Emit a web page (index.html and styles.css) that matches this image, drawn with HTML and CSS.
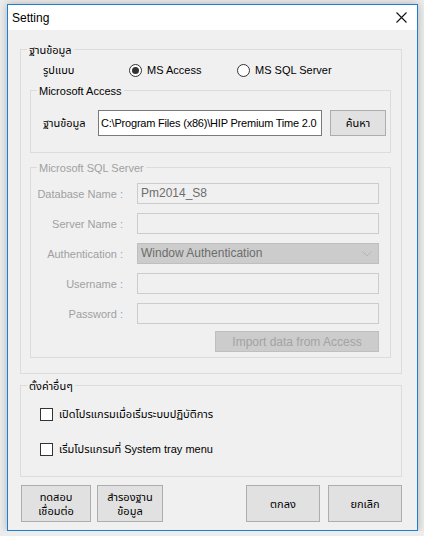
FILE: index.html
```html
<!DOCTYPE html>
<html lang="th">
  <head>
    <meta charset="UTF-8" />
    <title>Setting</title>
    <link rel="stylesheet" href="styles.css">
  </head>
  <body>
    <div class="window">
      <div class="titlebar">
        <span class="title">Setting</span>
        <svg class="close" width="11" height="11" viewBox="0 0 11 11">
          <path d="M0.5 0.5 L10.5 10.5 M10.5 0.5 L0.5 10.5" stroke="#111" stroke-width="1.1" fill="none" />
        </svg>
      </div>
      <div class="content">
        <div class="group main-group">
          <span class="legend">ฐานข้อมูล</span>
          <div class="type-row">
            <span class="type-label">รูปแบบ</span>
            <span class="option first"><span class="radio on"></span>MS Access</span>
            <span class="option"><span class="radio"></span>MS SQL Server</span>
          </div>
          <div class="group access-group">
            <span class="legend">Microsoft Access</span>
            <div class="path-row">
              <span class="path-label">ฐานข้อมูล</span>
              <div class="textbox">C:\Program Files (x86)\HIP Premium Time 2.0</div>
              <div class="btn browse">ค้นหา</div>
            </div>
          </div>
          <div class="group sql-group">
            <span class="legend muted">Microsoft SQL Server</span>
            <div class="sql-rows">
              <div class="field">
                <span class="field-label">Database Name :</span>
                <div class="box">Pm2014_S8</div>
              </div>
              <div class="field">
                <span class="field-label">Server Name :</span>
                <div class="box"></div>
              </div>
              <div class="field">
                <span class="field-label">Authentication :</span>
                <div class="box combo">
                  <span>Window Authentication</span>
                  <svg width="10" height="6" viewBox="0 0 10 6">
                    <path d="M0.5 0.5 L5 5 L9.5 0.5" stroke="#b5b5b5" fill="none" />
                  </svg>
                </div>
              </div>
              <div class="field">
                <span class="field-label">Username :</span>
                <div class="box"></div>
              </div>
              <div class="field">
                <span class="field-label">Password :</span>
                <div class="box"></div>
              </div>
              <div class="import-row">
                <div class="btn disabled">Import data from Access</div>
              </div>
            </div>
          </div>
        </div>
        <div class="group other-group">
          <span class="legend">ตั้งค่าอื่นๆ</span>
          <div class="check-row first"><span class="check"></span>เปิดโปรแกรมเมื่อเริ่มระบบปฏิบัติการ</div>
          <div class="check-row"><span class="check"></span>เริ่มโปรแกรมที่ System tray menu</div>
        </div>
        <div class="buttons">
          <div class="btn test">ทดสอบ<br>เชื่อมต่อ</div>
          <div class="btn backup">สำรองฐาน<br>ข้อมูล</div>
          <div class="spacer"></div>
          <div class="btn ok">ตกลง</div>
          <div class="btn cancel">ยกเลิก</div>
        </div>
      </div>
    </div>
  </body>
</html>
```
FILE: styles.css
```css
body {
  margin: 0;
  background: #ececec;
  font-family: "Liberation Sans", "Noto Sans Thai", "Tahoma", sans-serif;
  font-size: 11px;
  color: #000;
}
.window {
  box-sizing: border-box;
  width: 411px;
  height: 527px;
  margin: 4px 0 0 7px;
  border: 1px solid #1c7fd6;
  background: #f0f0f0;
  box-shadow: 0 0 8px rgba(0, 0, 0, 0.25);
  display: flex;
  flex-direction: column;
}
.titlebar {
  height: 25px;
  background: #fff;
  display: flex;
  align-items: center;
  justify-content: space-between;
  padding: 0 10px 0 4px;
}
.title {
  font-size: 12px;
}
.close {
  display: block;
}
.content {
  flex: 1;
  padding: 19px 15px 0 12px;
}
.group {
  box-sizing: border-box;
  border: 1px solid #dcdcdc;
}
.legend {
  display: block;
  width: fit-content;
  height: 14px;
  line-height: 14px;
  margin: -7px 0 0 6px;
  padding: 0 2px;
  background: #f0f0f0;
}
.muted {
  color: #a0a0a0;
}
.main-group {
  height: 325px;
}
.type-row {
  display: flex;
  align-items: center;
  height: 14px;
  margin: 6px 0 0 22px;
}
.type-label {
  width: 86px;
}
.option {
  display: flex;
  align-items: center;
  gap: 5px;
}
.option.first {
  width: 108px;
}
.radio {
  box-sizing: border-box;
  width: 13px;
  height: 13px;
  border: 1px solid #333;
  border-radius: 50%;
  background: #fff;
  display: flex;
  align-items: center;
  justify-content: center;
}
.radio.on::after {
  content: "";
  width: 7px;
  height: 7px;
  border-radius: 50%;
  background: #333;
}
.access-group {
  width: 361px;
  height: 63px;
  margin: 13px 0 0 9px;
}
.path-row {
  display: flex;
  align-items: center;
  margin: 12px 0 0 12px;
}
.path-label {
  width: 55px;
}
.textbox {
  box-sizing: border-box;
  width: 224px;
  height: 26px;
  line-height: 24px;
  padding: 0 2px;
  border: 1px solid #7a7a7a;
  background: #fff;
  font-size: 11px;
  letter-spacing: -0.2px;
  white-space: nowrap;
  overflow: hidden;
}
.btn {
  box-sizing: border-box;
  display: flex;
  align-items: center;
  justify-content: center;
  text-align: center;
  background: #e1e1e1;
  border: 1px solid #adadad;
  line-height: 14px;
}
.browse {
  width: 56px;
  height: 26px;
  margin-left: 8px;
}
.sql-group {
  width: 361px;
  height: 191px;
  margin: 14px 0 0 9px;
}
.sql-rows {
  display: flex;
  flex-direction: column;
  gap: 9px;
  margin-top: 8px;
}
.field {
  display: flex;
  align-items: center;
}
.field-label {
  width: 92px;
  text-align: right;
  color: #a0a0a0;
  margin-right: 14px;
}
.box {
  box-sizing: border-box;
  width: 242px;
  height: 21px;
  line-height: 19px;
  padding: 0 3px;
  border: 1px solid #cccccc;
  color: #6d6d6d;
  font-size: 12px;
}
.combo {
  display: flex;
  align-items: center;
  justify-content: space-between;
  background: #cccccc;
  border-color: #bfbfbf;
  padding-right: 6px;
}
.import-row {
  display: flex;
  justify-content: flex-end;
  padding-right: 11px;
  margin-top: -2px;
}
.btn.disabled {
  width: 164px;
  height: 21px;
  background: #cccccc;
  border-color: #bfbfbf;
  color: #a3a3a3;
  font-size: 12px;
}
.other-group {
  height: 92px;
  margin-top: 11px;
}
.check-row {
  display: flex;
  align-items: center;
  gap: 6px;
  height: 14px;
  margin: 21px 0 0 19px;
}
.check-row.first {
  margin-top: 14px;
}
.check {
  box-sizing: border-box;
  width: 13px;
  height: 13px;
  border: 1px solid #333;
  background: #fff;
}
.buttons {
  display: flex;
  margin-top: 8px;
  padding-left: 1px;
}
.buttons .btn {
  height: 37px;
}
.test {
  width: 70px;
}
.backup {
  width: 66px;
  margin-left: 6px;
}
.spacer {
  flex: 1;
}
.ok {
  width: 74px;
}
.cancel {
  width: 74px;
  margin-left: 8px;
}
```
